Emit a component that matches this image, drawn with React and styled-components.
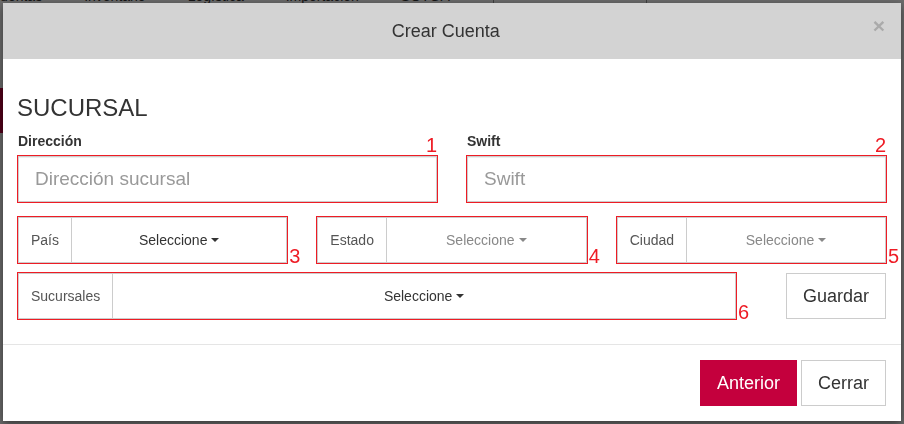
import React from "react";
import styled, { createGlobalStyle } from "styled-components";

const GlobalStyle = createGlobalStyle`
  html, body {
    margin: 0;
    padding: 0;
  }
  body {
    font-family: "Liberation Sans", Arial, sans-serif;
    background: #fff;
    color: #333;
    overflow: hidden;
  }
  * {
    box-sizing: border-box;
  }
`;

const Page = styled.div`
  width: 904px;
  height: 424px;
  overflow: hidden;
`;

const TopNav = styled.nav`
  display: flex;
  align-items: stretch;
  height: 20px;
  margin: -14px 0 0 -31px;
  font-size: 14px;
  line-height: 20px;
`;

const NavItem = styled.span`
  padding: 0 21px;
  color: #333;
  white-space: nowrap;
`;

const NavSearch = styled.div`
  width: 154px;
  margin-left: 22px;
  border-left: 1px solid #999;
  border-right: 1px solid #999;
`;

const SideTab = styled.div`
  width: 40px;
  height: 45px;
  margin-top: 82px;
  background: #c4003d;
`;

const Backdrop = styled.div`
  position: fixed;
  inset: 0;
  background: rgba(0, 0, 0, 0.58);
`;

const Modal = styled.div`
  position: fixed;
  top: 3px;
  left: 3px;
  width: 898px;
  background: #fff;
  box-shadow: 0 3px 9px rgba(0, 0, 0, 0.5);
`;

const Header = styled.div`
  display: flex;
  align-items: flex-start;
  height: 56px;
  padding: 0 16px;
  background: #d3d3d3;
`;

const Title = styled.h4`
  flex: 1;
  margin: 0;
  text-align: center;
  font-size: 18px;
  font-weight: 400;
  line-height: 56px;
  color: #333;
`;

const Close = styled.span`
  margin-top: 12px;
  font-size: 21px;
  font-weight: 700;
  line-height: 21px;
  color: #aaa;
`;

const Body = styled.div`
  padding: 36px 14px 24px;
`;

const Section = styled.h3`
  margin: 0;
  font-size: 24px;
  font-weight: 400;
  line-height: 26px;
  color: #333;
`;

const Cols = styled.div`
  display: grid;
  grid-template-columns: repeat(${(p) => p.$n}, 1fr);
  column-gap: 28px;
  margin-top: ${(p) => p.$top}px;
`;

const Field = styled.div`
  display: flex;
  flex-direction: column;
`;

const Label = styled.label`
  margin: 0 0 4px 1px;
  font-size: 14px;
  font-weight: 700;
  line-height: 20px;
  color: #333;
`;

const Frame = styled.div`
  position: relative;
  display: flex;
  height: 48px;
  width: ${(p) => (p.$w ? `${p.$w}px` : "auto")};
  border: 1px solid #ee1c25;
`;

const Marker = styled.span`
  position: absolute;
  font-size: 20px;
  line-height: 20px;
  color: #ee1c25;
  ${(p) =>
    p.$side
      ? `left: calc(100% + 2px); bottom: -3px;`
      : `right: 0; bottom: calc(100% + 1px);`}
`;

const TextInput = styled.input`
  width: 100%;
  height: 100%;
  padding: 0 16px;
  border: 1px solid #ccc;
  box-shadow: inset 0 1px 1px rgba(0, 0, 0, 0.075);
  font-family: inherit;
  font-size: 19px;
  color: #555;
  outline: none;

  &::placeholder {
    color: #999;
  }
`;

const Addon = styled.span`
  display: flex;
  align-items: center;
  padding: 0 12px;
  border: 1px solid #ccc;
  font-size: 14px;
  color: #555;
`;

const Dropdown = styled.button`
  flex: 1;
  display: flex;
  align-items: center;
  justify-content: center;
  gap: 4px;
  border: 1px solid #ccc;
  border-left: 0;
  background: #fff;
  font-family: inherit;
  font-size: 14px;
  color: ${(p) => (p.$muted ? "#888" : "#333")};
`;

const Caret = styled.span`
  width: 0;
  height: 0;
  border-top: 4px solid currentColor;
  border-left: 4px solid transparent;
  border-right: 4px solid transparent;
`;

const LastRow = styled.div`
  display: flex;
  align-items: center;
  justify-content: space-between;
  margin-top: 8px;
`;

const Button = styled.button`
  width: ${(p) => p.$w}px;
  height: 46px;
  padding: 0;
  border: 1px solid ${(p) => (p.$primary ? "#c4003d" : "#ccc")};
  background: ${(p) => (p.$primary ? "#c4003d" : "#fff")};
  color: ${(p) => (p.$primary ? "#fff" : "#333")};
  font-family: inherit;
  font-size: 18px;
`;

const SaveButton = styled(Button)`
  margin-right: 1px;
`;

const Footer = styled.div`
  display: flex;
  justify-content: flex-end;
  gap: 4px;
  padding: 15px;
  border-top: 1px solid #e5e5e5;
`;

function SelectGroup({ label, muted, n, width }) {
  return (
    <Frame $w={width}>
      <Addon>{label}</Addon>
      <Dropdown $muted={muted}>
        Seleccione <Caret />
      </Dropdown>
      <Marker $side>{n}</Marker>
    </Frame>
  );
}

export default function App() {
  return (
    <Page>
      <GlobalStyle />
      <TopNav>
        <NavItem>Cuentas</NavItem>
        <NavItem>Inventario</NavItem>
        <NavItem>Logística</NavItem>
        <NavItem>Importación</NavItem>
        <NavItem>SOTGA</NavItem>
        <NavSearch />
      </TopNav>
      <SideTab />
      <Backdrop />
      <Modal>
        <Header>
          <Title>Crear Cuenta</Title>
          <Close>×</Close>
        </Header>
        <Body>
          <Section>SUCURSAL</Section>
          <Cols $n={2} $top={10}>
            <Field>
              <Label>Dirección</Label>
              <Frame>
                <TextInput placeholder="Dirección sucursal" />
                <Marker>1</Marker>
              </Frame>
            </Field>
            <Field>
              <Label>Swift</Label>
              <Frame>
                <TextInput placeholder="Swift" />
                <Marker>2</Marker>
              </Frame>
            </Field>
          </Cols>
          <Cols $n={3} $top={13}>
            <SelectGroup label="País" n="3" />
            <SelectGroup label="Estado" n="4" muted />
            <SelectGroup label="Ciudad" n="5" muted />
          </Cols>
          <LastRow>
            <SelectGroup label="Sucursales" n="6" width={720} />
            <SaveButton $w={100}>Guardar</SaveButton>
          </LastRow>
        </Body>
        <Footer>
          <Button $primary $w={97}>Anterior</Button>
          <Button $w={85}>Cerrar</Button>
        </Footer>
      </Modal>
    </Page>
  );
}
